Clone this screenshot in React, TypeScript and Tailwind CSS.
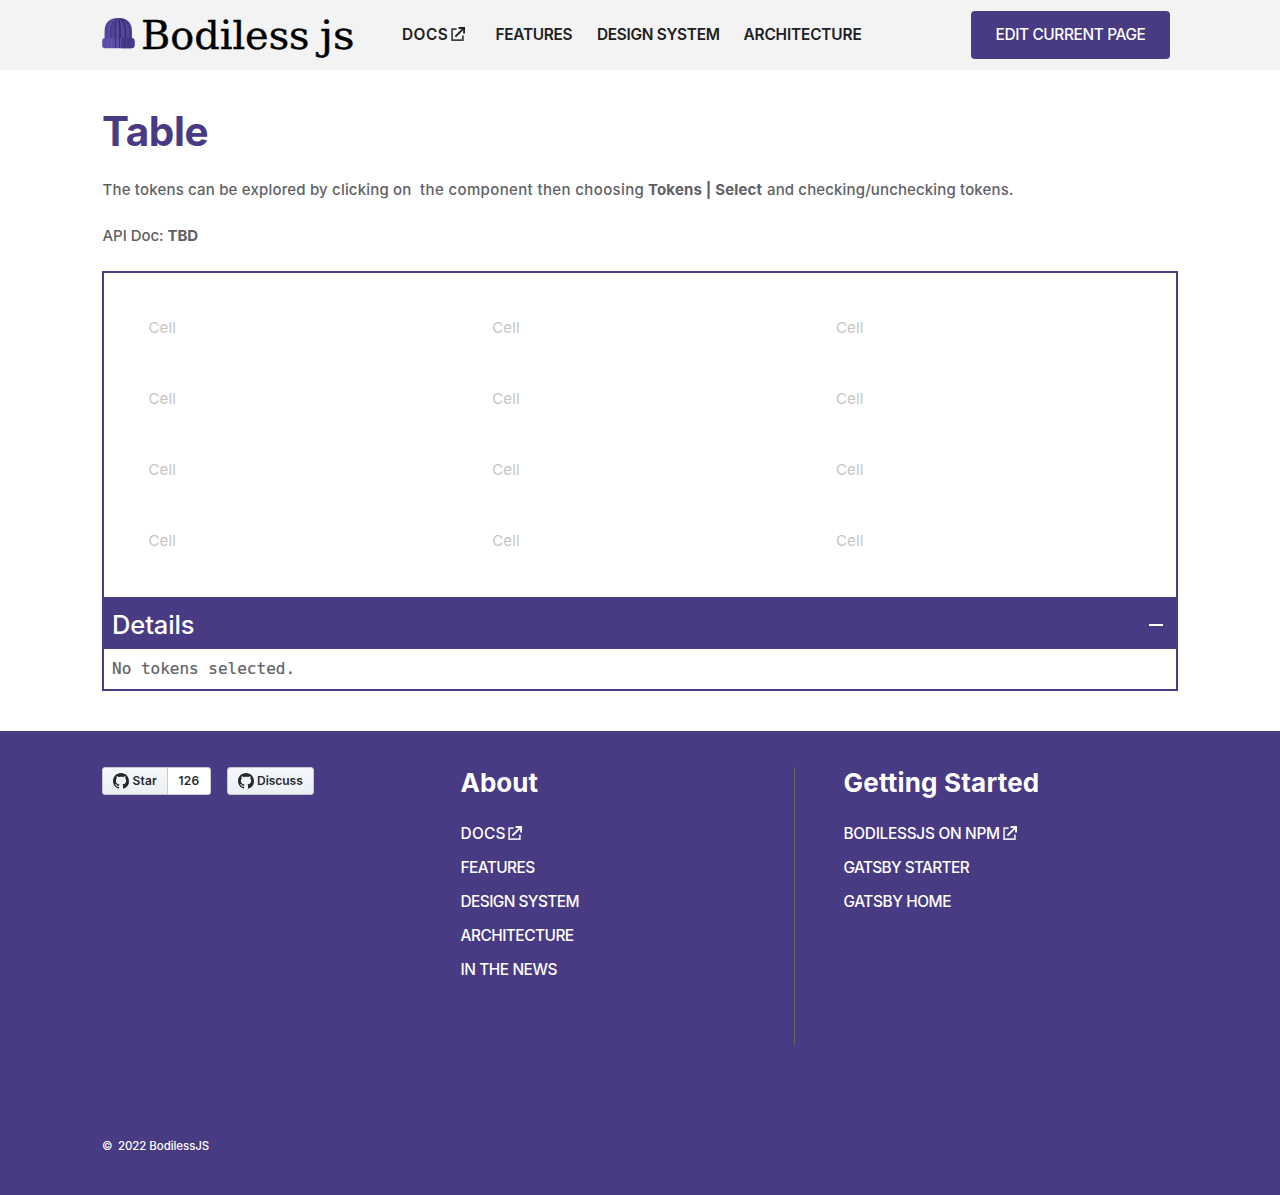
import React from "react";

function ExternalIcon({ className = "" }: { className?: string }) {
  return (
    <svg viewBox="0 0 14 14" width="14" height="14" fill="none" stroke="currentColor" className={className}>
      <path d="M5.6 2.2H1.1v10.9h10.8V8.4" strokeWidth="1.7" opacity="0.85" />
      <path d="M4.4 9.6 12.6 1.4" strokeWidth="1.9" />
      <path d="M7.6 1h5.5v5.5" strokeWidth="1.9" />
    </svg>
  );
}

function GithubMark() {
  return (
    <svg viewBox="0 0 16 16" width="16" height="16" fill="#24292f" className="shrink-0">
      <path d="M8 0C3.58 0 0 3.58 0 8c0 3.54 2.29 6.53 5.47 7.59.4.07.55-.17.55-.38 0-.19-.01-.82-.01-1.49-2.01.37-2.53-.49-2.69-.94-.09-.23-.48-.94-.82-1.13-.28-.15-.68-.52-.01-.53.63-.01 1.08.58 1.23.82.72 1.21 1.87.87 2.33.66.07-.52.28-.87.51-1.07-1.78-.2-3.64-.89-3.64-3.95 0-.87.31-1.59.82-2.15-.08-.2-.36-1.02.08-2.12 0 0 .67-.21 2.2.82.64-.18 1.32-.27 2-.27.68 0 1.36.09 2 .27 1.53-1.04 2.2-.82 2.2-.82.44 1.1.16 1.92.08 2.12.51.56.82 1.27.82 2.15 0 3.07-1.87 3.75-3.65 3.95.29.25.54.73.54 1.48 0 1.07-.01 1.93-.01 2.2 0 .21.15.46.55.38A8.013 8.013 0 0016 8c0-4.42-3.58-8-8-8z" />
    </svg>
  );
}

function Logo() {
  return (
    <svg viewBox="0 0 252 48" width="252" height="48" className="block" role="img" aria-label="Bodiless js">
      {/* knitted cap */}
      <path d="M2.600 29V20C2.600 11 8 6.900 16.300 6.900S30 11 30 20v9z" fill="#54459a" />
      <g fill="none" strokeWidth="1.400">
        <path d="M6.700 28v-7c0-6 3-11 7-13" stroke="#5d4ea6" />
        <path d="M9 28v-7c0-6 2.300-11 6-13" stroke="#483a88" />
        <path d="M13 28v-7c0-6 1-11 2.500-13" stroke="#40337a" />
        <path d="M15.500 28V8" stroke="#5a4ba0" />
        <path d="M18 28v-7c0-6-.5-11-1.500-13.500" stroke="#35295f" />
        <path d="M21.500 28v-7c0-6-1.500-11-4.500-13.500" stroke="#55469a" />
        <path d="M23.500 28v-7c0-6-1.500-11-5.500-13.500" stroke="#382c68" />
        <path d="M28 28v-7c0-6-3-11-8-13" stroke="#43367f" />
      </g>
      <rect x="0.200" y="27" width="32.300" height="10.200" rx="3" fill="#5c4da8" />
      <path d="M19 27h10.500a3 3 0 0 1 3 3v4.200a3 3 0 0 1-3 3H19z" fill="#473a89" />
      <path d="M5.500 27v10M9.500 27v10" stroke="#6253b0" strokeWidth="1.200" />
      <path d="M13.500 27v10M17.500 27v10M22.500 27v10M27 27v10" stroke="#3e3178" strokeWidth="1.100" />
      <g fill="#000" stroke="#000" strokeWidth="0.400" fontFamily="'DejaVu Serif', serif" fontSize="38.500">
        <text x="39" y="37.700" textLength="168.500" lengthAdjust="spacingAndGlyphs">Bodiless</text>
        <text x="218" y="37.700" textLength="34.500" lengthAdjust="spacingAndGlyphs">js</text>
      </g>
    </svg>
  );
}

const rows = [0, 1, 2, 3];
const columns = [0, 1, 2];

export default function App() {
  return (
    <div className="flex h-[1195px] w-full flex-col bg-white font-['Inter',sans-serif] text-[#5f6166]">
      <header className="flex h-[70px] shrink-0 items-center bg-[#f3f3f3] pr-[110px] pl-[102px]">
        <a className="block h-12 w-[252px]"><Logo /></a>
        <nav className="ml-[48px] flex items-center text-[15.400px] leading-6 font-semibold whitespace-nowrap text-[#202020]">
          <a className="flex w-[93.500px] items-center tracking-[0.470px]">DOCS<ExternalIcon className="mb-[2px] ml-[2.500px]" /></a>
          <a className="w-[101.500px] tracking-[-0.280px]">FEATURES</a>
          <a className="w-[146.500px] tracking-[-0.300px]">DESIGN SYSTEM</a>
          <a className="tracking-[-0.160px]">ARCHITECTURE</a>
        </nav>
        <a className="ml-auto flex h-12 w-[199px] items-center justify-center rounded bg-[#483a83] text-[15.400px] font-[450] tracking-[-0.370px] whitespace-nowrap text-white">EDIT CURRENT PAGE</a>
      </header>

      <main className="px-[102px] pt-9">
        <h1 className="h-[51px] text-[40.500px] leading-[51px] font-bold tracking-[-0.400px] text-[#483a83]">Table</h1>
        <p className="mt-[21px] flex h-6 pl-[0.500px] text-[15px] leading-6 font-[450] whitespace-nowrap">
          <span className="w-[317.500px] tracking-[0.180px]">The tokens can be explored by clicking on&nbsp;</span>
          <span className="w-[228px] tracking-[0.370px]">the component then choosing</span>
          <b className="w-[119px] tracking-[0.160px]">Tokens | Select</b>
          <span className="tracking-[0.140px]">and checking/unchecking tokens.</span>
        </p>
        <p className="mt-[22px] h-6 pl-[0.500px] text-[15px] leading-6 font-[450] whitespace-nowrap">
          <span className="tracking-[-0.050px]">API Doc: </span>
          <b className="tracking-[-0.100px]">TBD</b>
        </p>

        <section className="mt-[23px] border-2 border-[#483a83]">
          <div className="px-5 py-5">
            {rows.map((r) => (
              <div key={r} className="grid h-[71px] grid-cols-[343.700px_343.700px_1fr] items-center text-[15px] tracking-[0.150px] text-[#c4c4c4]">
                {columns.map((c) => <div key={c} className="pl-[24.500px]">Cell</div>)}
              </div>
            ))}
          </div>
          <div className="flex h-[52px] items-center justify-between bg-[#483a83] pt-[3px] pr-[13px] pl-2 text-[25.500px] font-[450] tracking-[-0.120px] text-white">
            <span className="pt-px">Details</span>
            <span className="h-[2px] w-[14px] bg-white" />
          </div>
          <div className="flex h-10 items-center pl-2 font-['DejaVu_Sans_Mono',monospace] text-base [-webkit-text-stroke:0.2px_currentColor]">No tokens selected.</div>
        </section>
      </main>

      <footer className="mt-10 flex grow flex-col bg-[#483a83] px-[102px] pt-9 text-white">
        <div className="flex h-[278px]">
          <div className="flex w-[358.500px] items-start gap-4 text-xs font-semibold text-[#24292f]">
            <div className="flex h-7 w-[109px] overflow-hidden rounded-[3px] border border-[#c9cace] bg-white">
              <span className="flex w-[65px] items-center gap-[3.500px] border-r border-[#c9cace] bg-gradient-to-b from-[#f6f8fa] to-[#ebf0f4] pl-[10px] tracking-[0.150px]"><GithubMark />Star</span>
              <span className="flex grow items-center justify-center tracking-[0.250px]">126</span>
            </div>
            <div className="flex h-7 w-[87px] items-center gap-[3px] rounded-[3px] border border-[#c9cace] bg-gradient-to-b from-[#f6f8fa] to-[#ebf0f4] pl-[10px] tracking-[-0.030px]"><GithubMark />Discuss</div>
          </div>
          <div className="w-[334.500px] border-r border-[#66665f]">
            <h3 className="h-8 text-[26px] leading-8 font-bold">About</h3>
            <ul className="mt-[18px] text-[15.400px] leading-[34px] font-medium whitespace-nowrap">
              <li className="flex h-[34px] items-center tracking-[0.270px]">DOCS<ExternalIcon className="mb-[2px] ml-[2.500px]" /></li>
              <li className="tracking-[-0.550px]">FEATURES</li>
              <li className="tracking-[-0.550px]">DESIGN SYSTEM</li>
              <li className="tracking-[-0.500px]">ARCHITECTURE</li>
              <li className="tracking-[-0.420px]">IN THE NEWS</li>
            </ul>
          </div>
          <div className="pl-[48.500px]">
            <h3 className="h-8 text-[26px] leading-8 font-bold tracking-[0.200px] whitespace-nowrap">Getting Started</h3>
            <ul className="mt-[18px] text-[15.400px] leading-[34px] font-medium whitespace-nowrap">
              <li className="flex h-[34px] items-center tracking-[-0.280px]">BODILESSJS ON NPM<ExternalIcon className="mb-[2px] ml-[3px]" /></li>
              <li className="tracking-[-0.640px]">GATSBY STARTER</li>
              <li className="tracking-[-0.420px]">GATSBY HOME</li>
            </ul>
          </div>
        </div>
        <div className="mt-[92px] flex h-5 items-center text-[11.500px] font-medium tracking-[-0.080px]">
          <span className="w-4 text-[11.500px]">©</span>
          <span>2022 BodilessJS</span>
        </div>
      </footer>
    </div>
  );
}
